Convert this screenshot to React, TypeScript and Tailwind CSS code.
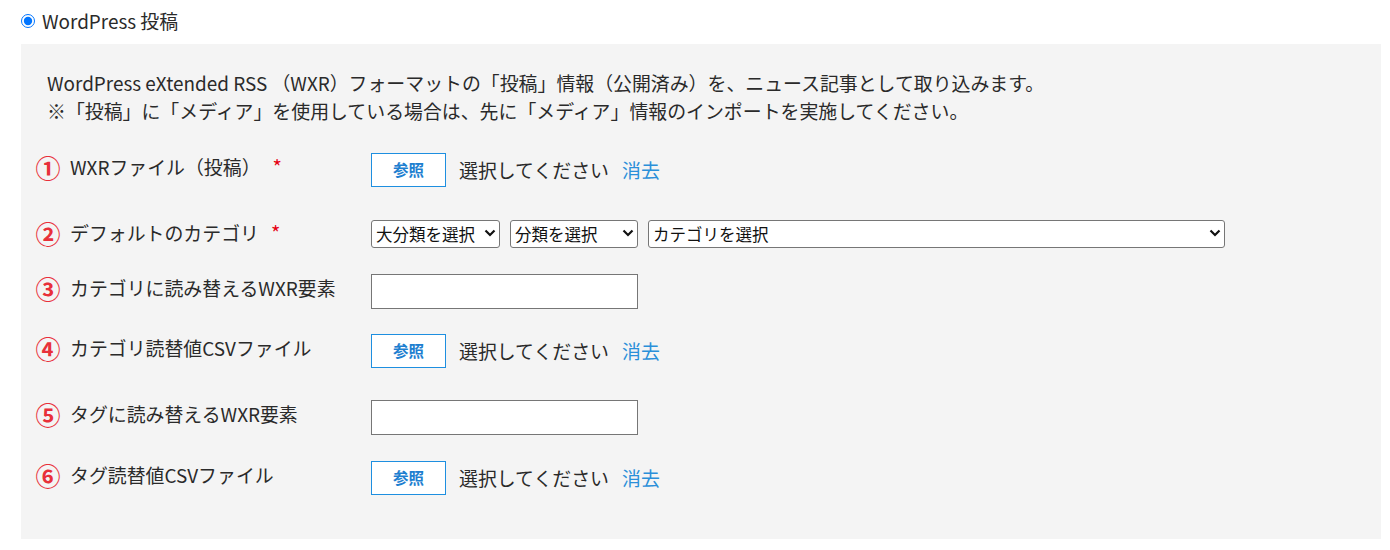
import { ReactNode } from "react";

const font = { fontFamily: '"Noto Sans CJK JP", "Noto Sans", sans-serif' };

function Num({ n }: { n: string }) {
  return (
    <span className="flex w-[24px] shrink-0 justify-center text-[25px] leading-[28px] font-bold text-[#e8303a]">
      {n}
    </span>
  );
}

function Req() {
  return <span className="ml-3 text-[20px] text-[#e60012]">*</span>;
}

function Row({
  n,
  label,
  children,
  className,
}: {
  n: string;
  label: ReactNode;
  children: ReactNode;
  className: string;
}) {
  return (
    <div className={`flex items-start ${className}`}>
      <div className="flex w-[350px] shrink-0 items-center gap-[10px] pl-[15px] leading-[28px]">
        <Num n={n} />
        <span>{label}</span>
      </div>
      <div className="flex items-center">{children}</div>
    </div>
  );
}

function FilePick() {
  return (
    <div className="flex items-center">
      <button
        type="button"
        className="h-[34px] w-[75px] border border-[#1e8fe0] bg-white text-[15.5px] font-bold text-[#1e7fd0]"
      >
        参照
      </button>
      <span className="ml-[13px]">選択してください</span>
      <a className="ml-[13px] cursor-pointer text-[#2a8fd9]">消去</a>
    </div>
  );
}

function Select({ label, w }: { label: string; w: string }) {
  return (
    <div className={`relative ${w}`}>
      <select className="h-[28px] w-full appearance-none rounded-[3px] border border-[#767676] bg-white pl-[4px] text-[16.5px] leading-[26px] text-[#111]">
        <option>{label}</option>
      </select>
      <svg
        className="pointer-events-none absolute right-[4px] top-[9px]"
        width="12"
        height="10"
        viewBox="0 0 12 10"
      >
        <path d="M1.5 2.5 L6 7 L10.5 2.5" fill="none" stroke="#111" strokeWidth="2.2" />
      </svg>
    </div>
  );
}

function TextBox() {
  return <input type="text" className="h-[35px] w-[267px] border border-[#767676] bg-white" />;
}

export default function App() {
  return (
    <div className="min-h-[550px] bg-white pl-[21px] text-[18.9px] text-[#2a2a2a]" style={font}>
      <label className="flex h-[44px] items-center pb-[2px]">
        <input type="radio" defaultChecked className="m-0 h-[14px] w-[14px] accent-[#0075ff]" />
        <span className="ml-[7px]">WordPress 投稿</span>
      </label>

      <div className="w-[1360px] bg-[#f4f4f4] pt-[25px] pb-[44px]">
        <div className="pl-[26px] leading-[28px]">
          <p>WordPress eXtended RSS （WXR）フォーマットの「投稿」情報（公開済み）を、ニュース記事として取り込みます。</p>
          <p>※「投稿」に「メディア」を使用している場合は、先に「メディア」情報のインポートを実施してください。</p>
        </div>

        <Row
          n="①"
          className="mt-[28px]"
          label={
            <>
              WXRファイル（投稿）
              <Req />
            </>
          }
        >
          <FilePick />
        </Row>

        <Row
          n="②"
          className="mt-[32px]"
          label={
            <>
              デフォルトのカテゴリ
              <Req />
            </>
          }
        >
          <div className="flex gap-[10px]">
            <Select label="大分類を選択" w="w-[129px]" />
            <Select label="分類を選択" w="w-[128px]" />
            <Select label="カテゴリを選択" w="w-[577px]" />
          </div>
        </Row>

        <Row n="③" className="mt-[26px]" label="カテゴリに読み替えるWXR要素">
          <TextBox />
        </Row>

        <Row n="④" className="mt-[25px]" label="カテゴリ読替値CSVファイル">
          <FilePick />
        </Row>

        <Row n="⑤" className="mt-[32px]" label="タグに読み替えるWXR要素">
          <TextBox />
        </Row>

        <Row n="⑥" className="mt-[26px]" label="タグ読替値CSVファイル">
          <FilePick />
        </Row>
      </div>
    </div>
  );
}
